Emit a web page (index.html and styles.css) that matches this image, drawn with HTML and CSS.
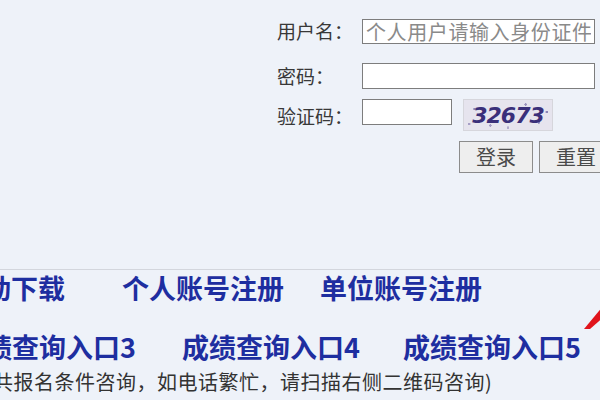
FILE: index.html
```html
<!DOCTYPE html>
<html lang="zh-CN">
<head>
<meta charset="utf-8">
<title>登录</title>
<link rel="stylesheet" href="styles.css">
</head>
<body>
<div class="page">
  <form class="login">
    <div class="row row-user">
      <label class="lbl">用户名：</label>
      <input class="field wide" type="text" placeholder="个人用户请输入身份证件">
    </div>
    <div class="row row-pass">
      <label class="lbl">密码：</label>
      <input class="field wide" type="password">
    </div>
    <div class="row row-code">
      <label class="lbl">验证码：</label>
      <input class="field short" type="text">
      <div class="captcha"><span>32673</span></div>
    </div>
    <div class="row row-btns">
      <span class="lbl"></span>
      <div class="btns">
        <button type="button" class="btn">登录</button>
        <button type="button" class="btn">重置</button>
      </div>
    </div>
  </form>

  <div class="links">
    <div class="line1">
      <a class="lk first">动下载</a>
      <a class="lk second">个人账号注册</a>
      <a class="lk">单位账号注册</a>
    </div>
    <div class="line2">
      <a class="lk c1">绩查询入口3</a>
      <a class="lk c2">成绩查询入口4</a>
      <a class="lk">成绩查询入口5</a>
    </div>
    <p class="note">共报名条件咨询，如电话繁忙，请扫描右侧二维码咨询)</p>
  </div>

  <svg class="arrow" width="24" height="30" viewBox="0 0 24 30">
    <polygon points="2,26 22,2 24,2 24,12 8,26" fill="#e0141c"/>
  </svg>
</div>
</body>
</html>
```
FILE: styles.css
```css
html, body {
  margin: 0;
  padding: 0;
}
body {
  background: #eef2f9;
  width: 600px;
  height: 400px;
  overflow: hidden;
  font-family: "Noto Sans CJK SC", "Noto Sans", sans-serif;
}
.page {
  position: relative;
  width: 600px;
  height: 400px;
  overflow: hidden;
}
.login {
  margin: 18px 0 0 277px;
  display: flex;
  flex-direction: column;
  width: 340px;
}
.row {
  display: flex;
  align-items: center;
}
.row-user { margin-bottom: 19px; }
.row-pass { margin-bottom: 10px; }
.row-code { align-items: flex-start; margin-bottom: 10px; }
.row-code .lbl { height: 26px; line-height: 34px; }
.lbl {
  width: 85px;
  flex: none;
  font-size: 19px;
  color: #383838;
  line-height: 26px;
}
.field {
  box-sizing: border-box;
  height: 26px;
  border: 1px solid #7d7d7d;
  background: #fff;
  padding: 0 3px;
  font-family: "Noto Sans CJK SC", sans-serif;
  font-size: 20px;
  line-height: 24px;
  outline: none;
  margin: 0;
}
.field::placeholder {
  color: #8a8a8a;
  letter-spacing: 0.6px;
}
.wide { width: 233px; }
.row-user .wide { height: 25px; }
.short { width: 90px; }
.captcha {
  margin-left: 11px;
  width: 90px;
  height: 32px;
  box-sizing: border-box;
  border: 1px solid #d6d6dc;
  background:
    radial-gradient(circle at 12% 30%, #8a82b0 0 1px, transparent 1.5px),
    radial-gradient(circle at 85% 75%, #9a8fc0 0 1px, transparent 1.5px),
    radial-gradient(circle at 30% 85%, #a49bc4 0 1px, transparent 1.5px),
    radial-gradient(circle at 70% 15%, #9a92bd 0 1px, transparent 1.5px),
    radial-gradient(circle at 94% 40%, #8b84b5 0 1px, transparent 1.5px),
    radial-gradient(circle at 50% 92%, #b0a8cc 0 1px, transparent 1.5px),
    radial-gradient(circle at 6% 80%, #a69fc6 0 1px, transparent 1.5px),
    #e6e4ee;
  display: flex;
  align-items: center;
  justify-content: center;
}
.captcha span {
  font-family: "DejaVu Sans", sans-serif;
  font-style: italic;
  font-weight: bold;
  font-size: 22px;
  color: #3a2f7a;
  letter-spacing: -1px;
}
.btns {
  display: flex;
  gap: 6px;
  padding-left: 97px;
}
.btn {
  width: 74px;
  height: 32px;
  flex: none;
  box-sizing: border-box;
  border: 1px solid #8c8c8c;
  background: #eeeeee;
  font-family: "Noto Sans CJK SC", sans-serif;
  font-size: 20px;
  color: #4a4a4a;
  padding: 0;
  line-height: 28px;
}
.links {
  margin-top: 96px;
  border-top: 1px solid #d3d6dd;
}
.lk {
  font-size: 27px;
  font-weight: bold;
  color: #1e2ea0;
  white-space: nowrap;
  flex: none;
}
.line1 {
  display: flex;
  height: 30px;
  line-height: 30px;
  margin: 3px 0 0 -16px;
}
.line1 .first { width: 138px; }
.line1 .second { width: 198px; }
.line2 {
  display: flex;
  height: 30px;
  line-height: 30px;
  margin: 29px 0 0 -15px;
}
.line2 .c1 { width: 197px; }
.line2 .c2 { width: 221px; }
.note {
  margin: 10px 0 0 -7px;
  font-size: 20px;
  line-height: 20px;
  letter-spacing: 0.5px;
  color: #333;
  white-space: nowrap;
}
.arrow {
  position: absolute;
  left: 582px;
  top: 303px;
}
```
